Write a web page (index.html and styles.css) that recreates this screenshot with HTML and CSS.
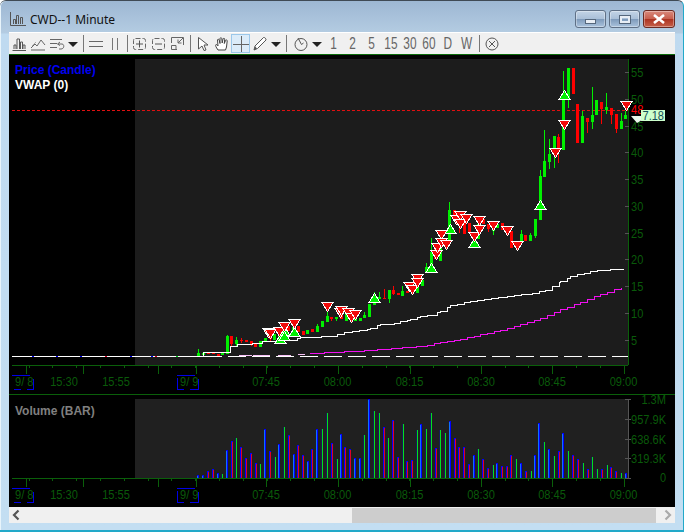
FILE: index.html
```
<!DOCTYPE html>
<html>
<head>
<title>CWD--1 Minute</title>
<meta http-equiv="Content-Type" content="text/html; charset=utf-8"/>
<link rel="stylesheet" href="styles.css">
</head>
<body>
<div class="window">
    <div class="titlebar">
        <svg class="appicon" width="16" height="14" viewBox="0 0 16 14">
            <path d="M0.5 0V13.5H16M3.5 12V7.5H5.5V12M6.5 12V3.5H8.5V12M10.5 12V5.5H12.5V12" fill="none" stroke="#555"/>
        </svg>
        <span class="title">CWD--1 Minute</span>
        <div class="caption">
            <div class="capbtn"><i class="minglyph"></i></div>
            <div class="capbtn"><i class="maxglyph"></i></div>
            <div class="capbtn close">
                <svg width="14" height="10" viewBox="0 0 14 10"><path d="M2 1L12 9M12 1L2 9" stroke="#fff" stroke-width="2.6"/></svg>
            </div>
        </div>
    </div>
    <div class="client">
        <div class="toolbar">
            <div class="tool"><svg width="16" height="16" viewBox="0 0 16 16"><path d="M1.5 14.5H15M3 13V9H5V13M6 13V3H8.500V13M9.500 13V6H11.500V13M12 13V9H14V13" fill="none" stroke="#555"/></svg></div>
            <div class="tool"><svg width="16" height="16" viewBox="0 0 16 16"><path d="M1 12L5 8L7 10L11 4L15 9M1 14H15" fill="none" stroke="#666"/><path d="M2 10L6 6" stroke="#aaa"/></svg></div>
            <div class="tool"><svg width="16" height="16" viewBox="0 0 16 16"><path d="M1 3.500H13M1 7.500H8M1 11.500H8M11 6L8.500 8L11 9.500M9 8H13C15.500 8 15.500 13 12 13H10" fill="none" stroke="#666"/></svg></div>
            <div class="drop"></div>
            <div class="sep"></div>
            <div class="tool"><svg width="16" height="16" viewBox="0 0 16 16"><path d="M1 5.500H15M1 10.500H15" stroke="#666"/></svg></div>
            <div class="tool"><svg width="16" height="16" viewBox="0 0 16 16"><path d="M5.500 2V14M10.500 2V14" stroke="#777"/></svg></div>
            <div class="sep"></div>
            <div class="tool"><svg width="16" height="16" viewBox="0 0 16 16"><rect x="1.500" y="2.500" width="12" height="11" rx="2" fill="none" stroke="#666" stroke-dasharray="5 2"/><path d="M4 8H11M7.500 4.500V11.500" stroke="#555"/></svg></div>
            <div class="tool"><svg width="16" height="16" viewBox="0 0 16 16"><rect x="1.500" y="2.500" width="12" height="11" rx="2" fill="none" stroke="#666" stroke-dasharray="5 2"/><path d="M4 8H11" stroke="#555"/></svg></div>
            <div class="tool"><svg width="16" height="16" viewBox="0 0 16 16"><path d="M1.500 7V1.500H13.500V9M7 13.500H1.500V9.500H6V13.500M13 2L8 7M8 3.500V7H11.500" fill="none" stroke="#666"/></svg></div>
            <div class="sep"></div>
            <div class="tool"><svg width="16" height="16" viewBox="0 0 16 16"><path d="M3.500 1.500L13 9H9L11 14L9 14.500L7 10L3.500 13Z" fill="#fff" stroke="#555"/></svg></div>
            <div class="tool"><svg width="16" height="16" viewBox="0 0 16 16"><path d="M4 14C2 11 1 9.500 2 8.500C3 8.500 4 10 4 10L3.500 4C3.500 3 5 3 5.200 4L6 7.500L6 2.500C6 1.500 7.800 1.500 7.800 2.500L8.200 7L9 3C9.200 2 10.800 2.200 10.700 3.200L10.300 7.500L11.500 4.500C12 3.500 13.500 4 13.200 5L12.500 11L11.500 14Z" fill="#fff" stroke="#444"/></svg></div>
            <div class="tool active"><svg width="16" height="16" viewBox="0 0 16 16"><path d="M8.500 0V16M0 8.500H16" stroke="#666"/></svg></div>
            <div class="tool"><svg width="16" height="16" viewBox="0 0 16 16"><path d="M2 14L3 10L11.500 1.500C12.500 1 14.500 3 14 4L5.500 12.500Z" fill="#fff" stroke="#555"/><path d="M2 14L3.200 10.500L5 12.500Z" fill="#555"/></svg></div>
            <div class="drop"></div>
            <div class="sep"></div>
            <div class="tool clock"><svg width="16" height="16" viewBox="0 0 16 16"><circle cx="8" cy="8.500" r="6" fill="none" stroke="#555"/><path d="M5 2L8.500 8.500L10.500 7" fill="none" stroke="#555"/></svg></div>
            <div class="drop"></div>
            <div class="tool num"><span>1</span></div>
            <div class="tool num"><span>2</span></div>
            <div class="tool num"><span>5</span></div>
            <div class="tool num"><span>15</span></div>
            <div class="tool num"><span>30</span></div>
            <div class="tool num"><span>60</span></div>
            <div class="tool num"><span>D</span></div>
            <div class="tool num"><span>W</span></div>
            <div class="sep"></div>
            <div class="tool"><svg width="16" height="16" viewBox="0 0 16 16"><circle cx="8" cy="8" r="6" fill="none" stroke="#555"/><path d="M5 5L11 11M11 5L5 11" stroke="#555"/></svg></div>
        </div>
        <svg id="chart" class="chart" width="666" height="452" viewBox="9 54 666 452"></svg>
        <div class="scrollbar">
            <svg width="16" height="16" viewBox="0 0 16 16"><path d="M9.500 3.500L5 8L9.500 12.500" fill="none" stroke="#555" stroke-width="2.200"/></svg>
            <div class="track"><div class="thumb"></div></div>
            <svg width="16" height="16" viewBox="0 0 16 16"><path d="M6.500 3.500L11 8L6.500 12.500" fill="none" stroke="#aaa" stroke-width="2.200"/></svg>
        </div>
    </div>
</div>
<script type="text/javascript" src="chart.js"></script>
</body>
</html>
```
FILE: styles.css
```
html, body {
    margin:0;
    padding:0;
    background:#fff;
}
.window {
    width:684px;
    height:532px;
    box-sizing:border-box;
    display:flex;
    flex-direction:column;
    padding:0 8px 7px 9px;
    border:solid 1px #3f4a55;
    border-width:1px 0 0 0;
    border-bottom:solid 2px #22a9c9;
    border-right:solid 1px #22a9c9;
    border-radius:6px 6px 0 0;
    background:linear-gradient(to bottom, #9db7d3 0, #b4cce2 32px, #bfdaf0 33px, #c3def2 100%);
    box-shadow:inset 1px 0 0 #e8f4fb;
    font-family:"Liberation Sans", Arial, sans-serif;
}
.titlebar {
    height:31px;
    flex:none;
    display:flex;
    align-items:flex-start;
    position:relative;
}
.appicon {
    margin:11px 0 0 1px;
}
.title {
    margin:11px 0 0 4px;
    font:12px/16px "Noto Sans", sans-serif;
    color:#111;
}
.caption {
    display:flex;
    gap:3px;
    margin:9px 0 0 auto;
    padding-right:0;
}
.capbtn {
    width:29px;
    height:16px;
    border:solid 1px #5f7086;
    border-radius:3px;
    display:flex;
    align-items:center;
    justify-content:center;
    background:linear-gradient(to bottom, #c3d4e6 0, #aac0d8 48%, #7f9bbb 52%, #a9c2dc 100%);
    box-shadow:inset 0 0 0 1px rgba(255,255,255,.35);
}
.capbtn.close {
    width:30px;
    border-color:#6a2a22;
    background:linear-gradient(to bottom, #d9897c 0, #c8604f 48%, #ad3422 52%, #c5604a 100%);
}
.minglyph {
    display:block;
    width:9px;
    height:3px;
    margin-top:4px;
    border:solid 1px #55677c;
    background:#e8eef5;
}
.maxglyph {
    display:block;
    width:6px;
    height:3px;
    border:solid 2px #e8eef5;
    outline:solid 1px #55677c;
}
.client {
    flex:1;
    display:flex;
    flex-direction:column;
    min-height:0;
    border-bottom:solid 1px #666;
}
.toolbar {
    height:21px;
    flex:none;
    display:flex;
    align-items:center;
    background:#f0f0f0;
    border-top:solid 1px #fff;
    border-bottom:solid 1px #0a6a0a;
}
.tool {
    width:19px;
    height:19px;
    box-sizing:border-box;
    display:flex;
    align-items:center;
    justify-content:center;
    flex:none;
}
.tool.clock {
    margin-left:2px;
}
.tool.active {
    background:#dcecf9;
    border:solid 1px #9cc8ea;
}
.num {
    font:16px "Liberation Sans", sans-serif;
    color:#666;
}
.num span {
    display:block;
    transform:scaleX(.74);
}
.drop {
    width:14px;
    flex:none;
    position:relative;
    height:19px;
}
.drop:after {
    content:"";
    position:absolute;
    left:2px;
    top:8px;
    border:solid 5px transparent;
    border-top-color:#222;
    border-bottom:0;
}
.sep {
    width:1px;
    height:17px;
    margin:0 2px 0 3px;
    flex:none;
    background:#777;
}
.chart {
    display:block;
    flex:none;
    background:#000;
}
.scrollbar {
    flex:1;
    display:flex;
    align-items:center;
    background:#f0f0f0;
}
.track {
    flex:1;
    height:15px;
}
.thumb {
    height:15px;
    width:304px;
    margin-left:327px;
    background:#cdcdcd;
}

/* chart */
.plot { fill:#1c1c1c; }
.volplot { fill:#202020; }
.axis { stroke:#0a5f0a; shape-rendering:crispEdges; }
.gridtick { stroke:#555; shape-rendering:crispEdges; }
.lbl {
    font:13px "Liberation Sans", sans-serif;
    fill:#0a5a0a;
}
.legend { font:bold 12px "Liberation Sans", sans-serif; }
.blue { fill:#0000f0; }
.white { fill:#fff; }
.gray { fill:#808080; }
.redtxt { fill:#f00; }
.cur { fill:#ccffcc; }
.curtxt {
    font:13px "Liberation Sans", sans-serif;
    fill:#14505a;
}
.curarrow { fill:#e8f8e8; }
.up { fill:#00f000; shape-rendering:crispEdges; }
.dn { fill:#f00; shape-rendering:crispEdges; }
.upw { stroke:#00f000; shape-rendering:crispEdges; }
.dnw { stroke:#f00; shape-rendering:crispEdges; }
.bar-blue { fill:#0000ff; shape-rendering:crispEdges; }
.bar-cyan { fill:#1070ff; shape-rendering:crispEdges; }
.bar-red { fill:#e0002a; shape-rendering:crispEdges; }
.bar-green { fill:#00e020; shape-rendering:crispEdges; }
.vwap { fill:none; stroke:#fff; stroke-width:1; shape-rendering:crispEdges; }
.magenta { fill:none; stroke:#f010f0; stroke-width:1; shape-rendering:crispEdges; }
.pink { fill:none; stroke:#f8c0f8; stroke-width:1; shape-rendering:crispEdges; }
.zero { stroke:#fff; stroke-width:1; stroke-dasharray:18 6; shape-rendering:crispEdges; }
.zeroleft { stroke:#fff; stroke-width:1; shape-rendering:crispEdges; }
.lastline { stroke:#e01010; stroke-dasharray:3 2; shape-rendering:crispEdges; }
.datebox { fill:none; stroke:#0000e6; stroke-width:1; shape-rendering:crispEdges; }
.sell { fill:#f00a0a; stroke:#fff; stroke-width:1; shape-rendering:crispEdges; }
.buy { fill:#00f000; stroke:#fff; stroke-width:1; shape-rendering:crispEdges; }
```
FILE: chart.js
```
var svg = document.getElementById('chart');
var NS = 'http://www.w3.org/2000/svg';

function el(name, attrs, text) {
    var e = document.createElementNS(NS, name);
    for (var k in attrs) {
        e.setAttribute(k, attrs[k]);
    }
    if (text) {
        e.textContent = text;
    }
    svg.appendChild(e);
    return e;
}

function line(x1, y1, x2, y2, cls) {
    el('line', {x1:x1, y1:y1, x2:x2, y2:y2, 'class':cls});
}

function label(x, y, text, cls, anchor) {
    return el('text', {x:x, y:y, 'class':cls, 'text-anchor':anchor || 'start'}, text);
}

// axis numbers are tall and narrow in the original
function narrow(x, y, text, cls, anchor) {
    var t = label(x, y, text, cls, anchor);
    t.setAttribute('textLength', (t.getComputedTextLength() * 0.85).toFixed(1));
    t.setAttribute('lengthAdjust', 'spacingAndGlyphs');
}

// lines are drawn in small steps, one per few bars
function stepped(pts) {
    var out = [];
    var lastY = null;
    for (var i = 0; i < pts.length - 1; i++) {
        var a = pts[i];
        var b = pts[i + 1];
        for (var x = a[0]; x < b[0]; x += 7) {
            var y = Math.round(a[1] + (b[1] - a[1]) * (x - a[0]) / (b[0] - a[0])) + 0.5;
            if (lastY !== null) {
                out.push(x + ',' + lastY);
            }
            out.push(x + ',' + y);
            lastY = y;
        }
    }
    return out.join(' ');
}

// plot backgrounds
el('rect', {x:135, y:58, width:493, height:306, 'class':'plot'});
el('rect', {x:135, y:398, width:493, height:79, 'class':'volplot'});

// time axes, price pane and volume pane share the same ticks
var times = [[64,'15:30'], [116,'15:55'], [266,'07:45'], [337.5,'08:00'], [409.5,'08:15'], [481,'08:30'], [552,'08:45'], [623.5,'09:00']];
var majors = [26, 83, 158, 196, 266, 338, 410, 481, 552, 624];

function timeAxis(y, labelY, off) {
    line(12, y, 628, y, 'axis');
    var i;
    for (i = 0; i < 26; i++) {
        line(minorTick(i), y, minorTick(i), y + 3, 'axis');
    }
    for (i = 0; i < majors.length; i++) {
        line(majors[i], y, majors[i], y + 9, 'axis');
    }
    for (i = 0; i < times.length; i++) {
        narrow(times[i][0], labelY, times[i][1], 'lbl', 'middle');
    }
    narrow(15, labelY, '9/ 8', 'lbl');
    narrow(180, labelY, '9/ 9', 'lbl');
    el('path', {d:'M12 ' + (374+off) + 'H30M14 ' + (388+off) + 'H21M27 ' + (388+off) + 'H33V' + (378+off), 'class':'datebox'});
    el('path', {d:'M177 ' + (374+off) + 'H195M177 ' + (377+off) + 'V' + (388+off) + 'H184M190 ' + (388+off) + 'H198V' + (378+off), 'class':'datebox'});
}

function minorTick(i) {
    return Math.round(28.5 + i * 23.8);
}

timeAxis(364, 385, 0);
timeAxis(477, 498, 113);
line(9, 393, 675, 393, 'axis');

// price axis
line(628, 58, 628, 364, 'axis');
var prices = [[55,71], [50,98], [45,125], [40,151], [35,178], [30,205], [25,232], [20,258], [15,285], [10,312], [5,339]];
for (var i = 0; i < prices.length; i++) {
    line(625, prices[i][1], 629, prices[i][1], 'gridtick');
    narrow(631, prices[i][1] + 5, String(prices[i][0]), 'lbl');
}

// volume axis
line(628, 398, 628, 477, 'gridtick');
var vols = [['1.3M',398], ['957.9K',418], ['638.6K',438], ['319.3K',457], ['0',477]];
for (var i = 0; i < vols.length; i++) {
    line(625, vols[i][1], 631, vols[i][1], 'gridtick');
    narrow(666, Math.min(vols[i][1] + 5, 481), vols[i][0], 'lbl', 'end');
}

// zero lines
line(12, 355.5, 198, 355.5, 'zeroleft');
line(204, 355.5, 628, 355.5, 'zero');
var marks = [[32,'bar-blue'], [56,'bar-blue'], [80,'bar-blue'], [105,'bar-red'], [130,'bar-blue'], [151,'bar-blue'], [155,'bar-red'], [176,'bar-green']];
for (var i = 0; i < marks.length; i++) {
    el('rect', {x:marks[i][0], y:355, width:2, height:1, 'class':marks[i][1]});
}

// last price
line(12, 109.5, 628, 109.5, 'lastline');

// x, body top, body bottom, high, low, g/r
var candles = [
    [198,352,356,348,356,'g'], [203,352,354,352,354,'g'], [208,351,353,351,353,'r'], [213,352,353,352,353,'r'],
    [218,353,355,353,355,'r'], [222,352,354,352,354,'g'], [227,335,353,334,353,'g'], [231,335,343,335,345,'r'],
    [236,339,343,336,345,'g'], [241,339,340,337,342,'r'], [246,339,341,339,341,'r'], [251,340,344,340,345,'r'],
    [255,343,346,343,346,'r'], [260,340,346,340,346,'g'], [265,337,341,337,341,'g'], [270,334,338,334,340,'r'],
    [274,333,339,333,339,'g'], [279,332,338,330,340,'g'], [284,328,334,328,334,'g'], [288,325,330,325,330,'r'],
    [293,326,330,326,330,'g'], [298,325,331,325,331,'r'], [303,330,334,330,334,'r'], [307,329,333,329,333,'g'],
    [312,328,331,328,331,'r'], [317,325,331,323,331,'g'], [322,320,326,320,326,'g'], [327,315,321,310,321,'g'],
    [331,316,318,316,320,'r'], [336,316,318,316,320,'g'], [341,312,318,312,318,'r'], [346,312,320,312,320,'g'],
    [351,312,320,312,320,'r'], [355,318,320,318,320,'g'], [360,317,320,317,320,'g'], [364,314,317,311,317,'g'],
    [369,303,316,303,316,'g'], [374,293,304,291,304,'g'], [379,296,298,291,298,'g'], [384,297,298,288,298,'r'],
    [389,289,298,289,302,'g'], [393,289,293,285,294,'r'], [398,292,294,292,294,'r'], [402,290,295,285,295,'g'],
    [407,290,292,290,292,'r'], [412,286,292,286,294,'g'], [417,285,292,285,292,'g'], [422,279,285,279,285,'g'],
    [426,266,272,262,272,'g'], [431,251,270,237,270,'g'], [435,245,258,245,258,'r'], [440,245,260,245,260,'g'],
    [445,238,246,238,246,'r'], [449,209,240,201,240,'g'], [454,209,218,209,218,'r'], [459,215,224,215,232,'r'],
    [464,222,233,218,233,'r'], [469,222,231,222,231,'r'], [474,233,245,233,245,'g'], [478,223,238,223,238,'g'],
    [483,218,223,218,223,'r'], [488,223,228,223,231,'r'], [493,225,230,225,234,'g'], [497,223,227,223,227,'g'],
    [502,222,229,222,229,'r'], [507,226,233,226,233,'r'], [511,230,247,230,247,'r'], [516,240,245,240,245,'r'],
    [521,233,240,229,240,'g'], [525,234,240,234,240,'r'], [530,234,240,232,240,'g'], [535,218,235,218,237,'g'],
    [540,175,219,169,219,'g'], [544,160,176,129,176,'g'], [549,153,161,138,168,'g'], [554,135,147,135,167,'g'],
    [558,136,150,133,162,'r'], [563,98,149,70,149,'g'], [568,67,97,67,107,'g'], [573,67,93,67,93,'r'],
    [577,103,142,103,142,'r'], [582,115,142,110,142,'g'], [587,117,121,117,132,'r'], [592,114,121,86,128,'g'],
    [596,99,114,99,114,'g'], [601,101,108,101,123,'r'], [606,106,109,92,113,'g'], [611,107,114,107,123,'r'],
    [616,113,128,113,132,'r'], [621,120,128,112,128,'g'], [625,114,118,110,118,'g']
];
for (var i = 0; i < candles.length; i++) {
    var c = candles[i];
    line(c[0] + 0.5, c[3], c[0] + 0.5, c[4], c[5] == 'g' ? 'upw' : 'dnw');
    el('rect', {x:c[0] - 1, y:c[1], width:3, height:c[2] - c[1], 'class':c[5] == 'g' ? 'up' : 'dn'});
}

// vwap and the magenta average
var vwap = [[197,355],[203,351],[225,351],[230,345],[238,343],[258,342],[262,340],[290,339],[300,336],[330,335],[345,331],[360,329],[370,327],[380,323],[395,322],[400,320],[410,318],[420,315],[430,314],[440,310],[450,304],[470,300],[500,296],[525,293],[545,289],[560,280],[570,275],[590,270],[610,268],[626,268]];
var avg = [[310,352],[330,351],[350,350],[370,349],[395,347],[420,345],[440,341],[460,338],[480,333],[500,329],[520,323],[540,317],[560,308],[580,301],[600,293],[626,284]];
el('polyline', {'class':'vwap', points:stepped(vwap)});
el('polyline', {'class':'magenta', points:stepped(avg)});
el('path', {d:'M239 354.500H252M253 354.500H270M278 354.500H291M298 353.500H305', 'class':'pink'});

// orders, [x, top of the triangle]
var sells = [[268,327],[270,328],[279,326],[284,321],[294,318],[327,301],[340,307],[341,305],[348,307],[351,312],[355,309],
    [409,281],[412,284],[417,273],[417,277],[436,249],[437,242],[441,229],[441,237],[446,239],[456,214],[460,210],[460,218],[466,213],
    [474,231],[479,215],[479,224],[493,220],[507,225],[517,240],[555,147],[564,119],[626,100]];
var buys = [[280,333],[284,325],[284,330],[294,326],[374,292],[431,262],[450,223],[474,237],[540,199],[564,89]];
for (var i = 0; i < buys.length; i++) {
    var b = buys[i];
    el('polygon', {'class':'buy', points:(b[0] + 0.5) + ',' + (b[1] + 0.5) + ' ' + (b[0] + 6) + ',' + (b[1] + 9.5) + ' ' + (b[0] - 5) + ',' + (b[1] + 9.5)});
}
for (var i = 0; i < sells.length; i++) {
    var s = sells[i];
    el('polygon', {'class':'sell', points:(s[0] - 5) + ',' + (s[1] + 0.5) + ' ' + (s[0] + 6) + ',' + (s[1] + 0.5) + ' ' + (s[0] + 0.5) + ',' + (s[1] + 9.5)});
}

// current price tag
narrow(631, 113, '48', 'lbl redtxt');
el('polygon', {'class':'curarrow', points:'631,115 642,115 642,119 637,122'});
el('rect', {x:641, y:109, width:24, height:11, 'class':'cur'});
narrow(642.5, 119, '7.18', 'curtxt');

// volume, [x, top, kind]
var bars = [[198,474,'b'],[203,474,'b'],[208,470,'r'],[213,468,'r'],[218,472,'b'],[222,473,'g'],[227,449,'b'],[232,440,'r'],[236,437,'g'],[241,446,'r'],
    [246,457,'r'],[251,452,'r'],[256,462,'r'],[260,463,'g'],[265,428,'b'],[270,450,'r'],[275,456,'g'],[279,443,'b'],[284,426,'g'],[289,434,'r'],
    [294,453,'b'],[298,444,'r'],[303,454,'r'],[308,460,'b'],[312,448,'r'],[317,428,'b'],[322,428,'g'],[327,412,'g'],[332,442,'r'],[337,458,'g'],
    [341,433,'b'],[345,446,'r'],[350,448,'r'],[355,457,'b'],[360,457,'b'],[364,434,'g'],[369,398,'b'],[374,410,'g'],[379,412,'g'],[384,426,'r'],
    [388,437,'g'],[393,419,'r'],[398,456,'r'],[403,423,'g'],[407,460,'r'],[412,459,'r'],[417,429,'g'],[421,423,'b'],[426,428,'g'],[431,412,'g'],
    [436,447,'r'],[440,429,'g'],[445,432,'g'],[450,420,'b'],[455,437,'r'],[459,446,'r'],[464,446,'r'],[469,463,'r'],[474,454,'b'],[478,448,'g'],
    [483,458,'r'],[488,467,'r'],[493,464,'g'],[497,462,'b'],[502,465,'r'],[507,465,'r'],[511,454,'r'],[516,458,'g'],[521,462,'b'],[526,470,'r'],
    [531,470,'g'],[535,454,'b'],[539,422,'b'],[544,441,'g'],[549,448,'b'],[554,455,'g'],[559,450,'r'],[563,432,'b'],[568,450,'g'],[573,454,'r'],
    [578,458,'r'],[583,462,'g'],[588,468,'r'],[592,456,'g'],[597,468,'g'],[602,468,'r'],[607,464,'g'],[611,466,'r'],[616,470,'r'],[621,472,'g'],[626,472,'b']];
for (var i = 0; i < bars.length; i++) {
    var v = bars[i];
    if (v[2] == 'g') {
        el('rect', {x:v[0], y:v[1], width:1, height:477 - v[1], 'class':'bar-green'});
        el('rect', {x:v[0] - 1, y:v[1], width:1, height:477 - v[1], 'class':'bar-blue', opacity:0.25});
    } else {
        el('rect', {x:v[0] - 1, y:v[1], width:2, height:477 - v[1], 'class':'bar-blue'});
        el('rect', {x:v[2] == 'r' ? v[0] : v[0] - 1, y:v[1] + 1, width:1, height:476 - v[1], 'class':v[2] == 'r' ? 'bar-red' : 'bar-cyan'});
    }
}

// legends
label(15, 73, 'Price (Candle)', 'legend blue');
label(15, 88, 'VWAP (0)', 'legend white');
label(15, 414, 'Volume (BAR)', 'legend gray');
```
